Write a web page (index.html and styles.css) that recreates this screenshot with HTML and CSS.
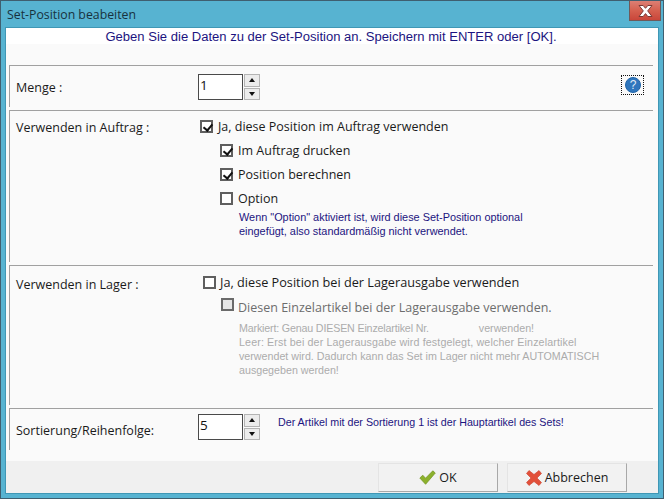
FILE: index.html
```html
<!DOCTYPE html>
<html lang="de">
<head>
<meta charset="utf-8">
<title>Set-Position beabeiten</title>
<link rel="stylesheet" href="styles.css">
</head>
<body>
<div class="window">
  <header class="titlebar">
    <span class="title">Set-Position beabeiten</span>
    <button class="close" type="button" aria-label="Schließen">
      <svg width="15" height="12" viewBox="0 0 15 12"><path d="M1 .5h4.200L7.500 3.300 9.800 .5H14L9.700 5.900 14 11.500H9.800L7.500 8.600 5.200 11.500H1l4.300-5.600z" fill="#fff" stroke="#7a3a36" stroke-width="1"/></svg>
    </button>
  </header>
  <div class="client">
    <div class="banner">Geben Sie die Daten zu der Set-Position an. Speichern mit ENTER oder [OK].</div>
    <main class="main">
      <section class="group group-menge">
        <div class="label label-menge">Menge :</div>
        <div class="spin">
          <div class="spin-input">1</div>
          <div class="spin-btns">
            <div class="spin-btn"><i class="arrow-up"></i></div>
            <div class="spin-btn"><i class="arrow-down"></i></div>
          </div>
        </div>
        <div class="help">
          <svg width="16" height="16" viewBox="0 0 16 16"><circle cx="8" cy="8" r="7.500" fill="#2f76bd" stroke="#2466a8"/><text x="8" y="12" text-anchor="middle" class="help-q">?</text></svg>
        </div>
      </section>

      <section class="group group-auftrag">
        <div class="label label-auftrag">Verwenden in Auftrag :</div>
        <div class="opts">
          <label class="check"><span class="box on"></span>Ja, diese Position im Auftrag verwenden</label>
          <div class="sub">
            <label class="check"><span class="box on"></span>Im Auftrag drucken</label>
            <label class="check"><span class="box on"></span>Position berechnen</label>
            <label class="check"><span class="box"></span>Option</label>
            <p class="note">Wenn "Option" aktiviert ist, wird diese Set-Position optional<br>eingefügt, also standardmäßig nicht verwendet.</p>
          </div>
        </div>
      </section>

      <section class="group group-lager">
        <div class="label label-lager">Verwenden in Lager :</div>
        <div class="opts opts-lager">
          <label class="check check-wide"><span class="box"></span>Ja, diese Position bei der Lagerausgabe verwenden</label>
          <div class="sub sub-lager">
            <label class="check check-off"><span class="box box-off"></span>Diesen Einzelartikel bei der Lagerausgabe verwenden.</label>
            <p class="note note-off"><span class="tight">Markiert: Genau DIESEN Einzelartikel Nr.</span><span class="gap"></span>verwenden!<br><span class="loose">Leer: Erst bei der Lagerausgabe wird festgelegt, welcher Einzelartikel</span><br>verwendet wird. Dadurch kann das Set im Lager nicht mehr AUTOMATISCH<br>ausgegeben werden!</p>
          </div>
        </div>
      </section>

      <section class="group group-sort">
        <div class="label label-sort">Sortierung/Reihenfolge:</div>
        <div class="spin">
          <div class="spin-input">5</div>
          <div class="spin-btns">
            <div class="spin-btn"><i class="arrow-up"></i></div>
            <div class="spin-btn"><i class="arrow-down"></i></div>
          </div>
        </div>
        <p class="sort-note">Der Artikel mit der Sortierung 1 ist der Hauptartikel des Sets!</p>
      </section>
    </main>
    <footer class="footer">
      <button class="btn btn-ok" type="button">
        <svg width="17" height="15" viewBox="0 0 17 15"><path d="M.8 8 3.800 5.200 6.500 8.200 13.800.8 16.300 3 6.600 14.300z" fill="#8cb12c" stroke="#71921f" stroke-width=".7"/></svg>
        OK
      </button>
      <button class="btn btn-cancel" type="button">
        <svg width="16" height="16" viewBox="0 0 16 16"><path d="M3 .5 8 4.500 13 .5 15.500 3.500 11 8 15.500 12.500 13 15.500 8 11.500 3 15.500 .5 12.500 5 8 .5 3.500z" fill="#e2503a" stroke="#c9402c" stroke-width=".6"/></svg>
        Abbrechen
      </button>
    </footer>
  </div>
</div>
</body>
</html>
```

FILE: styles.css
```css
* { box-sizing: border-box; }
html, body { margin: 0; padding: 0; }
body {
  width: 664px;
  height: 499px;
  overflow: hidden;
  font-family: "Open Sans", "Noto Sans", sans-serif;
  font-size: 12px;
  color: #1a1a1a;
}
.window {
  width: 664px;
  height: 499px;
  display: flex;
  flex-direction: column;
  background: #57b3d1;
  border: 1px solid #3f5f70;
  padding: 0 5px 5px;
}
.titlebar {
  height: 27px;
  flex: none;
  display: flex;
  align-items: flex-start;
  justify-content: space-between;
}
.title {
  margin: 6px 0 0 1px;
  font-size: 12.300px;
  line-height: 16px;
  color: #17313d;
}
.close {
  width: 32px;
  height: 20px;
  margin: 0 -3px 0 0;
  padding: 0;
  border: 1px solid #6f5a5a;
  border-top: 0;
  background: linear-gradient(#dc7f74 0%, #d5604f 50%, #c9463a 100%);
  display: flex;
  align-items: center;
  justify-content: center;
}
.client {
  flex: 1;
  display: flex;
  flex-direction: column;
  background: #fafafa;
  min-height: 0;
  box-shadow: 0 0 0 1px #3f97b5;
}
.banner {
  height: 16px;
  flex: none;
  background: #fff;
  padding-right: 2px;
  text-align: center;
  font-family: "Liberation Sans", Arial, sans-serif;
  font-size: 13.050px;
  line-height: 17px;
  color: #1c1480;
}
.main {
  flex: 1;
  padding: 21px 5px 0 3px;
  min-height: 0;
}
.group {
  position: relative;
  display: flex;
  border-top: 1px solid #a0a0a0;
  border-left: 1px solid #a0a0a0;
}
.group-menge { height: 42px; margin-bottom: 3px; padding: 8px 0 0 188px; }
.group-auftrag { height: 152px; margin-bottom: 3px; }
.group-lager { height: 140px; margin-bottom: 3px; }
.group-sort { height: 42px; padding: 5px 0 0 188px; }
.label {
  position: absolute;
  left: 6px;
  font-size: 12.500px;
  line-height: 17px;
}
.label-menge { top: 13px; }
.label-auftrag { top: 8px; }
.label-lager { top: 10px; }
.label-sort { top: 13px; }
.spin { display: flex; flex: none; gap: 1px; align-items: flex-start; }
.spin-input {
  width: 45px;
  height: 26px;
  background: #fff;
  border: 1px solid #4a4a4a;
  padding-left: 1px;
  font-size: 13.500px;
  line-height: 20px;
  color: #111;
}
.spin-btns { display: flex; flex-direction: column; gap: 1px; }
.spin-btn {
  width: 16px;
  height: 12.500px;
  background: #ececec;
  border: 1px solid #b4b4b4;
  display: flex;
  align-items: center;
  justify-content: center;
}
.arrow-up, .arrow-down {
  width: 0;
  height: 0;
  border-left: 3.500px solid transparent;
  border-right: 3.500px solid transparent;
}
.arrow-up { border-bottom: 4px solid #111; }
.arrow-down { border-top: 4px solid #111; }
.help {
  position: absolute;
  right: 9px;
  top: 9px;
  width: 23px;
  height: 20px;
  border: 1px dotted #111;
  display: flex;
  align-items: center;
  justify-content: center;
}
.help-q { font-family: "Liberation Sans", Arial, sans-serif; font-size: 12px; fill: #dfeaf5; }
.opts { margin-left: 190px; padding-top: 3px; }
.opts-lager { margin-left: 193px; padding-top: 4px; }
.check {
  display: flex;
  align-items: center;
  gap: 5px;
  height: 24px;
  font-size: 12.500px;
  white-space: nowrap;
}
.check-wide { font-size: 12.700px; gap: 4px; }
.box {
  width: 13px;
  height: 13px;
  flex: none;
  background: #fff;
  border: 2px solid #5f5f5f;
  position: relative;
}
.box.on::after {
  content: "";
  position: absolute;
  left: 2.500px;
  top: 0;
  width: 4px;
  height: 7px;
  border: solid #111;
  border-width: 0 2px 2px 0;
  transform: rotate(40deg);
}
.sub { margin-left: 20px; }
.sub-lager { margin-left: 18px; margin-top: 1px; }
.check-off { color: #6d6d6d; gap: 4px; }
.box-off { background: #e6e6e6; border-color: #6a6a6a; margin-top: -6px; }
.note {
  margin: 0 0 0 19px;
  font-family: "Liberation Sans", Arial, sans-serif;
  font-size: 10.900px;
  line-height: 14px;
  color: #1c1480;
}
.note-off { margin: 2px 0 0 18px; font-size: 10.700px; color: #acacac; white-space: nowrap; }
.tight { letter-spacing: -.17px; }
.loose { letter-spacing: .13px; }
.gap { display: inline-block; width: 50px; }
.sort-note {
  margin: 1px 0 0 18px;
  font-family: "Liberation Sans", Arial, sans-serif;
  font-size: 10.700px;
  line-height: 14px;
  color: #1c1480;
}
.footer {
  height: 32px;
  flex: none;
  background: #f0f0f0;
  display: flex;
  justify-content: flex-end;
  gap: 9px;
  padding: 2px 31px 0 0;
}
.btn {
  height: 29px;
  width: 120px;
  display: flex;
  align-items: center;
  justify-content: center;
  gap: 3px;
  padding: 0;
  background: #f2f2f2;
  border: 1px solid;
  border-color: #e4e4e4 #a8a8a8 #a8a8a8 #e4e4e4;
  font-family: "Open Sans", "Noto Sans", sans-serif;
  font-size: 12.500px;
  color: #1a1a1a;
}
```
